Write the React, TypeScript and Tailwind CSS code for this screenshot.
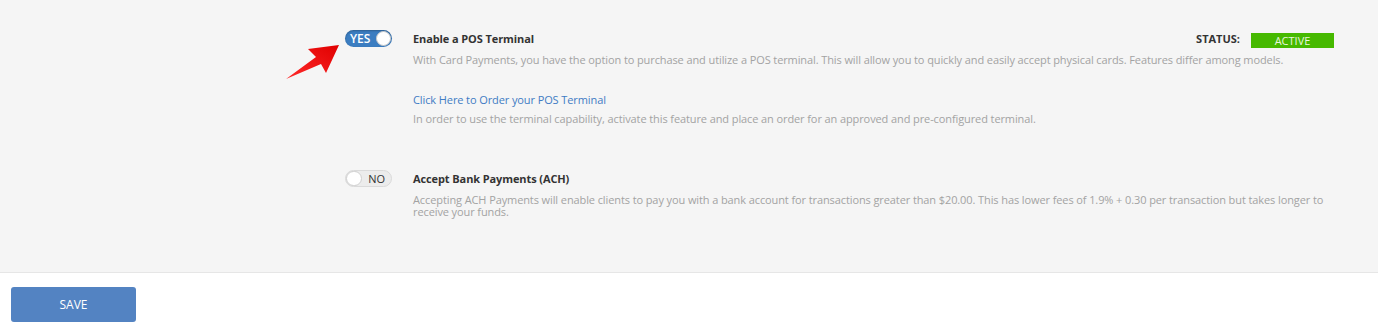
import React from 'react';

const font = { fontFamily: '"Open Sans", "Liberation Sans", sans-serif' };

const Toggle: React.FC<{ on: boolean }> = ({ on }) => {
  if (on) {
    return (
      <div className="relative h-[17px] w-[47px] shrink-0 rounded-full bg-[#3b7dc1] shadow-[inset_0_1px_2px_rgba(0,0,0,0.25)]">
        <span className="absolute left-[5px] top-0 text-[12px] font-semibold leading-[17px] text-white">YES</span>
        <span className="absolute right-[1px] top-[1px] h-[15px] w-[15px] rounded-full border border-[#c9c9c9] bg-white" />
      </div>
    );
  }
  return (
    <div className="relative h-[17px] w-[47px] shrink-0 rounded-full border border-[#dadada] bg-[#ececec]">
      <span className="absolute left-0 top-0 h-[15px] w-[16px] rounded-full border border-[#cfcfcf] bg-white" />
      <span className="absolute right-[6px] top-0 text-[11px] leading-[15px] text-[#333]">NO</span>
    </div>
  );
};

export default function App() {
  return (
    <div className="w-[1378px] bg-white" style={font}>
      <div className="relative h-[273px] border-b border-[#e6e6e6] bg-[#f5f5f5] pl-[345px] pr-[44px] pt-[30px]">
        {/* red arrow */}
        <svg className="absolute left-[280px] top-[38px]" width="70" height="45" viewBox="0 0 70 45">
          <defs>
            <linearGradient id="arr" x1="0" y1="1" x2="1" y2="0">
              <stop offset="0" stopColor="#ff2a2a" />
              <stop offset="1" stopColor="#e00000" />
            </linearGradient>
          </defs>
          <polygon points="59,7 28,11 36,19 6,41 41,26 46,35" fill="url(#arr)" />
        </svg>

        <div className="flex">
          <Toggle on />
          <div className="ml-[21px] flex-1">
            <div className="flex items-start justify-between">
              <h3 className="text-[11px] font-bold leading-[18px] tracking-[-0.1px] text-[#333]">Enable a POS Terminal</h3>
              <div className="flex items-center">
                <span className="text-[11px] font-bold leading-[18px] text-[#333]">STATUS:</span>
                <span className="ml-[11px] mt-[2px] block h-[15px] w-[83px] bg-[#46b900] text-center text-[11px] leading-[15px] text-[#e8f7dc]">
                  ACTIVE
                </span>
              </div>
            </div>
            <p className="mt-[4px] text-[11px] leading-[16px] tracking-[-0.1px] text-[#a3a3a3]">
              With Card Payments, you have the option to purchase and utilize a POS terminal. This will allow you to quickly and easily accept physical cards. Features differ among models.
            </p>
            <a href="#" className="mt-[24px] block text-[11px] leading-[16px] tracking-[-0.1px] text-[#3f7cc4]">
              Click Here to Order your POS Terminal
            </a>
            <p className="mt-[3px] text-[11px] leading-[16px] tracking-[-0.1px] text-[#a3a3a3]">
              In order to use the terminal capability, activate this feature and place an order for an approved and pre-configured terminal.
            </p>
          </div>
        </div>

        <div className="mt-[43px] flex">
          <Toggle on={false} />
          <div className="ml-[21px] flex-1 pr-[10px]">
            <h3 className="text-[11px] font-bold leading-[18px] tracking-[-0.1px] text-[#333]">Accept Bank Payments (ACH)</h3>
            <p className="mt-[6px] text-[11px] leading-[12px] tracking-[-0.1px] text-[#a3a3a3]">
              Accepting ACH Payments will enable clients to pay you with a bank account for transactions greater than $20.00. This has lower fees of 1.9% + 0.30 per transaction but takes longer to receive your funds.
            </p>
          </div>
        </div>
      </div>

      <div className="h-[58px] pl-[11px] pt-[14px]">
        <button className="h-[35px] w-[125px] rounded-[3px] bg-[#5383c2] text-[12px] text-white">SAVE</button>
      </div>
    </div>
  );
}
